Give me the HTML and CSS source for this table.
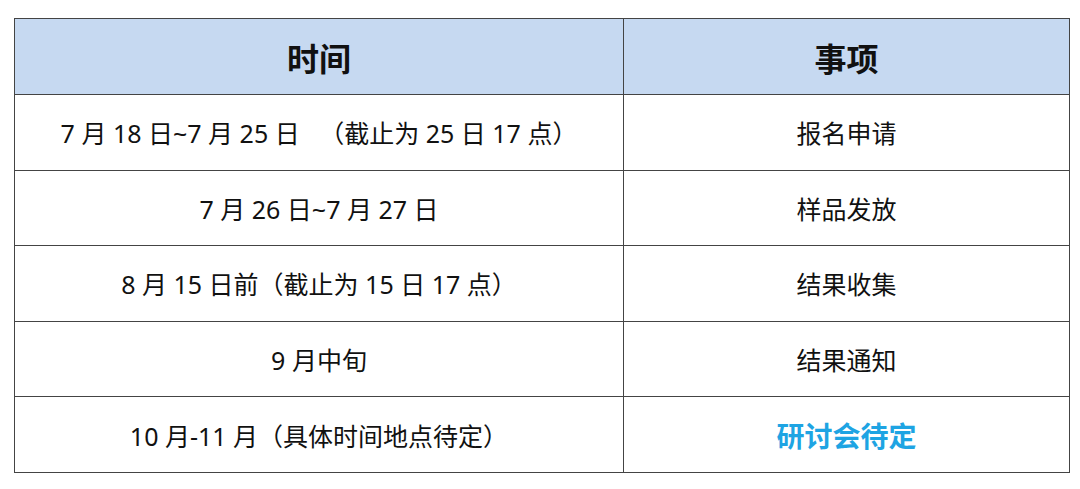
FILE: index.html
```html
<!DOCTYPE html>
<html lang="zh-CN">
<head>
<meta charset="utf-8">
<link rel="stylesheet" href="styles.css">
</head>
<body>
<div class="page">
<table class="schedule">
  <colgroup><col class="c-time"><col class="c-item"></colgroup>
  <thead>
    <tr><th>时间</th><th>事项</th></tr>
  </thead>
  <tbody>
    <tr><td>7 月 18 日~7 月 25 日 &nbsp;&nbsp;（截止为 25 日 17 点）</td><td>报名申请</td></tr>
    <tr><td>7 月 26 日~7 月 27 日</td><td>样品发放</td></tr>
    <tr><td>8 月 15 日前（截止为 15 日 17 点）</td><td>结果收集</td></tr>
    <tr><td>9 月中旬</td><td>结果通知</td></tr>
    <tr><td>10 月-11 月（具体时间地点待定）</td><td class="hl">研讨会待定</td></tr>
  </tbody>
</table>
</div>
</body>
</html>
```
FILE: styles.css
```css
html, body { margin: 0; padding: 0; background: #fff; }
.page { padding: 18px 0 0 14px; }
.schedule {
  border-collapse: collapse;
  width: 1055px;
  table-layout: fixed;
  font-family: "Noto Sans", "Noto Sans CJK SC", sans-serif;
  color: #111;
}
.c-time { width: 609px; }
.c-item { width: 446px; }
.schedule th, .schedule td {
  border: 1.5px solid #444;
  text-align: center;
  padding: 0;
}
.schedule th {
  background: #c6d9f1;
  height: 75px;
  font-size: 32px;
  font-weight: 700;
  font-family: "Noto Sans CJK SC", sans-serif;
}
.schedule td {
  height: 74.6px;
  font-size: 25px;
}
.schedule td.hl {
  color: #1ea4e3;
  font-weight: 700;
  font-size: 28px;
  font-family: "Noto Sans CJK SC", sans-serif;
}
```
